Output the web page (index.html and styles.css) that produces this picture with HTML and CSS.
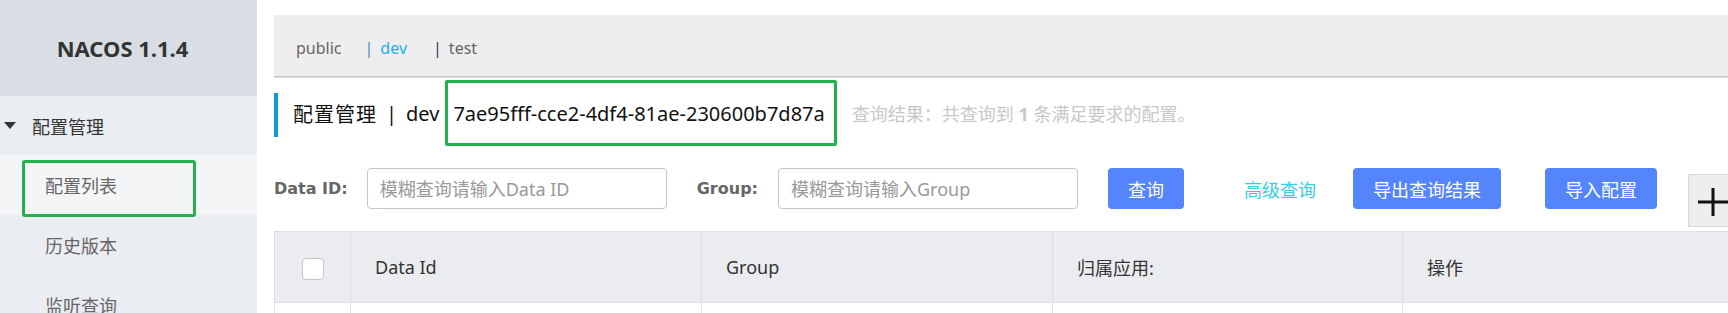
FILE: index.html
```html
<!DOCTYPE html>
<html lang="zh-CN">
<head>
    <meta charset="UTF-8">
    <meta name="viewport" content="width=device-width, initial-scale=1.0">
    <title>NACOS 1.1.4</title>
    <link rel="stylesheet" href="styles.css">
</head>
<body>
    <div class="app">
        <aside class="sidebar">
            <div class="logo">NACOS 1.1.4</div>
            <div class="menu-group"><span class="caret"></span>配置管理</div>
            <div class="menu-item active">配置列表<span class="mark"></span></div>
            <div class="menu-item">历史版本</div>
            <div class="menu-item">监听查询</div>
        </aside>

        <main class="main">
            <div class="ns-bar">
                <span class="ns ns-first">public</span>
                <span class="sep">|</span><span class="ns current">dev</span>
                <span class="sep sep-dark">|</span><span class="ns">test</span>
            </div>

            <div class="title-row">
                <span class="title-mark"></span>
                <span class="title">配置管理</span>
                <span class="title-sep">|</span>
                <span class="title-ns">dev</span>
                <span class="ns-id">7ae95fff-cce2-4df4-81ae-230600b7d87a</span>
                <span class="result">查询结果：共查询到 <b>1</b> 条满足要求的配置。</span>
            </div>

            <div class="search">
                <label class="field-label">Data ID:</label>
                <input class="field" type="text" placeholder="模糊查询请输入Data ID">
                <label class="field-label group-label">Group:</label>
                <input class="field" type="text" placeholder="模糊查询请输入Group">
                <button class="btn btn-query">查询</button>
                <a class="link-adv">高级查询</a>
                <button class="btn btn-export">导出查询结果</button>
                <button class="btn btn-import">导入配置</button>
            </div>

            <table class="config-table">
                <colgroup>
                    <col style="width:76px">
                    <col style="width:351px">
                    <col style="width:351px">
                    <col style="width:350px">
                    <col style="width:400px">
                </colgroup>
                <tr class="head">
                    <th class="check-cell"><span class="checkbox"></span></th>
                    <th>Data Id</th>
                    <th>Group</th>
                    <th>归属应用:</th>
                    <th>操作</th>
                </tr>
                <tr class="row">
                    <td></td><td></td><td></td><td></td><td></td>
                </tr>
            </table>
        </main>

        <div class="float-add">
            <svg width="30" height="30" viewBox="0 0 30 30">
                <path d="M0 15H30M15 1V29" stroke="#111" stroke-width="3" fill="none"/>
            </svg>
        </div>
    </div>
</body>
</html>
```

FILE: styles.css
```css
html, body {
    margin: 0;
    height: 313px;
    overflow: hidden;
    background: #fff;
}
body {
    font-family: "Noto Sans", "Noto Sans CJK SC", sans-serif;
    color: #333;
}
.app {
    display: flex;
    position: relative;
    height: 313px;
}

/* sidebar */
.sidebar {
    width: 257px;
    flex-shrink: 0;
    background: #eaedf1;
}
.logo {
    height: 96px;
    display: flex;
    align-items: center;
    justify-content: center;
    padding-right: 12px;
    background: #d9dee4;
    font-size: 22px;
    font-weight: bold;
    color: #333;
}
.menu-group {
    height: 59px;
    display: flex;
    align-items: center;
    font-size: 18px;
    color: #333;
}
.caret {
    width: 0;
    height: 0;
    border-left: 6.5px solid transparent;
    border-right: 6.5px solid transparent;
    border-top: 7px solid #333;
    margin: 0 16px 0 4px;
}
.menu-item {
    position: relative;
    height: 60px;
    display: flex;
    align-items: center;
    padding-left: 45px;
    font-size: 18px;
    color: #666;
}
.menu-item.active {
    background: #f4f5f7;
}
.mark {
    position: absolute;
    left: 22px;
    top: 5px;
    width: 174px;
    height: 57px;
    box-sizing: border-box;
    border: 3px solid #22b14c;
    border-radius: 3px;
}

/* main */
.main {
    flex: 1;
    padding-left: 17px;
    min-width: 0;
}
.ns-bar {
    margin-top: 15px;
    height: 56px;
    padding: 5px 0 0 22px;
    display: flex;
    align-items: center;
    background: #eeeeee;
    border-bottom: 1px solid #c6c6c6;
    box-shadow: 0 1px 0 #dedede;
    font-size: 16px;
}
.ns {
    color: #666;
    margin-right: 26px;
}
.ns-first {
    margin-right: 23px;
}
.ns.current {
    color: #1fb1e3;
}
.sep {
    color: #3a8fc4;
    margin-right: 7px;
}
.sep-dark {
    color: #2a3560;
}

.title-row {
    margin-top: 3px;
    height: 66px;
    display: flex;
    align-items: center;
    font-size: 20px;
    color: #111;
}
.title-mark {
    width: 4px;
    height: 44px;
    background: #0b9ad6;
    margin-right: 15px;
    position: relative;
    top: 2px;
}
.title {
    letter-spacing: 1px;
}
.title-sep {
    margin: 0 9px;
}
.ns-id {
    margin-left: 6px;
    height: 60px;
    display: flex;
    align-items: center;
    padding: 0 9px 0 5px;
    border: 3px solid #22b14c;
    border-radius: 2px;
}
.result {
    margin-left: 15px;
    font-size: 18px;
    color: #c8c8c8;
}

.search {
    margin-top: 22px;
    height: 41px;
    display: flex;
    align-items: center;
}
.field-label {
    font-family: "DejaVu Sans", sans-serif;
    font-weight: bold;
    font-size: 16px;
    color: #666;
    margin-right: 19px;
}
.group-label {
    margin-left: 30px;
    margin-right: 20px;
}
.field {
    width: 300px;
    height: 41px;
    box-sizing: border-box;
    border: 1px solid #c4c6cf;
    border-radius: 4px;
    padding: 0 12px;
    font-family: "Noto Sans", "Noto Sans CJK SC", sans-serif;
    font-size: 18px;
    outline: none;
}
.field::placeholder {
    color: #999;
}
.btn {
    height: 41px;
    padding: 0 20px;
    border: none;
    border-radius: 4px;
    background: #5485fd;
    color: #fff;
    font-family: "Noto Sans", "Noto Sans CJK SC", sans-serif;
    font-size: 18px;
}
.btn-query {
    margin-left: 30px;
}
.link-adv {
    margin-left: 60px;
    font-size: 18px;
    color: #33cde5;
}
.btn-export {
    margin-left: 37px;
}
.btn-import {
    margin-left: 44px;
}

.config-table {
    margin-top: 22px;
    border-collapse: collapse;
    table-layout: fixed;
    width: 1528px;
}
.config-table th, .config-table td {
    border: 1px solid #dcdee3;
    padding: 0 0 0 24px;
    text-align: left;
}
.config-table th {
    height: 70px;
    background: #ebecf0;
    font-weight: normal;
    font-size: 18px;
    color: #333;
}
.config-table th.check-cell {
    padding: 0;
    text-align: center;
}
.checkbox {
    display: inline-block;
    width: 22px;
    height: 22px;
    box-sizing: border-box;
    border: 1px solid #c4c6cf;
    border-radius: 4px;
    background: #fff;
    vertical-align: middle;
}
.config-table td {
    height: 40px;
}

.float-add {
    position: absolute;
    left: 1688px;
    top: 174px;
    width: 60px;
    height: 53px;
    box-sizing: border-box;
    border: 1px solid #d6d6d6;
    background: #eeeeee;
}
.float-add svg {
    position: absolute;
    left: 9px;
    top: 12px;
}
```
